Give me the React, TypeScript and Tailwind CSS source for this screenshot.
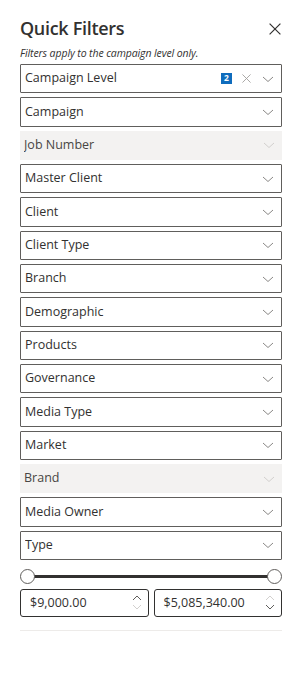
import React from 'react';

const filters = [
  { label: 'Campaign Level', badge: '2' },
  { label: 'Campaign' },
  { label: 'Job Number', disabled: true },
  { label: 'Master Client' },
  { label: 'Client' },
  { label: 'Client Type' },
  { label: 'Branch' },
  { label: 'Demographic' },
  { label: 'Products' },
  { label: 'Governance' },
  { label: 'Media Type' },
  { label: 'Market' },
  { label: 'Brand', disabled: true },
  { label: 'Media Owner' },
  { label: 'Type' },
];

const Chevron = ({ faded }: { faded?: boolean }) => (
  <svg width="12" height="12" viewBox="0 0 12 12" className={faded ? 'text-[#d2d0ce]' : 'text-[#8a8886]'}>
    <path d="M1 4 L6 8.5 L11 4" fill="none" stroke="currentColor" strokeWidth="1" />
  </svg>
);

const Cross = ({ size = 10, className = '' }: { size?: number; className?: string }) => (
  <svg width={size} height={size} viewBox="0 0 10 10" className={className}>
    <path d="M0.5 0.5 L9.5 9.5 M9.5 0.5 L0.5 9.5" fill="none" stroke="currentColor" strokeWidth="1" />
  </svg>
);

const Spinner = ({ upFaded }: { upFaded?: boolean }) => (
  <div className="flex flex-col items-center gap-[3px] pr-[6px]">
    <svg width="10" height="6" viewBox="0 0 10 6" className={upFaded ? 'text-[#d2d0ce]' : 'text-[#605e5c]'}>
      <path d="M1 5 L5 1 L9 5" fill="none" stroke="currentColor" strokeWidth="1" />
    </svg>
    <svg width="10" height="6" viewBox="0 0 10 6" className={upFaded ? 'text-[#605e5c]' : 'text-[#d2d0ce]'}>
      <path d="M1 1 L5 5 L9 1" fill="none" stroke="currentColor" strokeWidth="1" />
    </svg>
  </div>
);

const App = () => {
  return (
    <div className="w-[300px] h-[683px] bg-white font-['Open_Sans',sans-serif] text-[#323130]">
      <div className="pl-5 pr-[18px] pt-[14px]">
        <div className="flex items-center justify-between">
          <h1 className="text-[18px] font-semibold leading-[28px] tracking-[-0.3px]">Quick Filters</h1>
          <Cross size={12} className="text-[#323130] mr-[1px] mt-[2px]" />
        </div>
        <p className="text-[10.5px] italic leading-[14px] mt-[4px] mb-[4px] tracking-[-0.1px]">Filters apply to the campaign level only.</p>

        <div className="flex flex-col gap-[4px]">
          {filters.map((f) => (
            <div
              key={f.label}
              className={
                'h-[29.33px] flex items-center pl-[4px] pr-[7px] text-[12.5px] ' +
                (f.disabled ? 'bg-[#f3f2f1] text-[#484644]' : 'border border-[#605e5c] rounded-[1px]')
              }
            >
              <span className="flex-1 truncate">{f.label}</span>
              {f.badge && (
                <>
                  <span className="w-[11px] h-[11px] bg-[#0f6cbd] text-white text-[8.5px] font-bold flex items-center justify-center leading-none mr-[10px]">
                    {f.badge}
                  </span>
                  <Cross size={9} className="text-[#a19f9d] mr-[11px]" />
                </>
              )}
              <Chevron faded={f.disabled} />
            </div>
          ))}
        </div>

        <div className="relative h-[16px] mt-[9px] flex items-center">
          <div className="flex-1 mx-[7px] h-[3px] bg-[#323130]" />
          <span className="absolute left-0 w-[15px] h-[15px] rounded-full border border-[#605e5c] bg-white" />
          <span className="absolute right-0 w-[15px] h-[15px] rounded-full border border-[#605e5c] bg-white" />
        </div>

        <div className="flex gap-[5px] mt-[4px]">
          <div className="flex-1 h-[28px] border border-[#323130] rounded-[3px] flex items-center pl-[9px] text-[12.5px]">
            <span className="flex-1">$9,000.00</span>
            <Spinner />
          </div>
          <div className="flex-1 h-[28px] border border-[#323130] rounded-[3px] flex items-center pl-[9px] text-[12.5px]">
            <span className="flex-1">$5,085,340.00</span>
            <Spinner upFaded />
          </div>
        </div>

        <div className="mt-[13px] h-px bg-[#edebe9]" />
      </div>
    </div>
  );
};

export default App;
